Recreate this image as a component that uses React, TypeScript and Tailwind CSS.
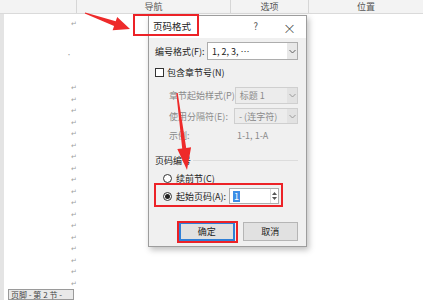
import React from "react";

const cjk = { fontFamily: '"Noto Sans CJK SC", "Noto Sans", sans-serif' };

function Chevron({ muted }: { muted?: boolean }) {
  return (
    <svg width="7" height="5" viewBox="0 0 7 5">
      <path d="M0.5 1 L3.5 4 L6.5 1" fill="none" stroke={muted ? "#9a9a9a" : "#606060"} strokeWidth="1" />
    </svg>
  );
}

function Select({ value, disabled, className }: { value: string; disabled?: boolean; className: string }) {
  return (
    <div
      className={`flex items-stretch border ${
        disabled ? "border-[#cfcfcf] bg-[#ececec] text-[#8a8a8a]" : "border-[#adadad] bg-white text-[#222]"
      } ${className}`}
    >
      <div className="flex-1 flex items-center pl-[4px] leading-none">{value}</div>
      <div className={`w-[10px] flex items-center justify-center ${disabled ? "bg-[#e2e2e2]" : "bg-[#e8e8e8]"}`}>
        <Chevron muted={disabled} />
      </div>
    </div>
  );
}

function Radio({ checked }: { checked?: boolean }) {
  return (
    <div className="w-[9px] h-[9px] shrink-0 rounded-full border border-[#333] bg-white flex items-center justify-center">
      {checked && <div className="w-[5px] h-[5px] rounded-full bg-[#222]" />}
    </div>
  );
}

function PageDialog() {
  return (
    <div className="absolute left-[148px] top-[15px] w-[159px] h-[232px] border border-[#9d9d9d] bg-[#f0f0f0] shadow-[2px_3px_6px_rgba(0,0,0,0.25)] flex flex-col whitespace-nowrap">
      {/* title bar */}
      <div className="h-[22px] shrink-0 bg-white flex items-center pl-[4px] pr-[10px] text-[9.5px] leading-none text-[#222]">
        <span>页码格式</span>
        <span className="ml-auto text-[#555]">?</span>
        <span className="ml-[25px] text-[13px] leading-none text-[#333] font-light">×</span>
      </div>

      <div className="flex flex-col pl-[6px] pr-[8px] text-[9px] leading-none text-[#222]">
        <div className="mt-[4px] h-[18px] flex items-center">
          <span className="w-[52px]">编号格式(F):</span>
          <Select value="1, 2, 3, …" className="w-[91px] h-[18px]" />
        </div>

        <div className="mt-[7px] h-[11px] flex items-center gap-[3px]">
          <div className="w-[9px] h-[9px] border border-[#333] bg-white" />
          <span>包含章节号(N)</span>
        </div>

        <div className="mt-[9px] h-[17px] flex items-center text-[#8a8a8a]">
          <span className="pl-[14px] w-[81px]">章节起始样式(P)</span>
          <Select value="标题 1" disabled className="w-[66px] h-[17px]" />
        </div>

        <div className="mt-[4px] h-[16px] flex items-center text-[#8a8a8a]">
          <span className="pl-[14px] w-[81px]">使用分隔符(E):</span>
          <Select value="-  (连字符)" disabled className="w-[66px] h-[16px]" />
        </div>

        <div className="mt-[4px] h-[14px] flex items-center text-[#8a8a8a]">
          <span className="pl-[14px] w-[82px]">示例:</span>
          <span>1-1, 1-A</span>
        </div>

        <div className="mt-[12px] h-[12px] flex items-center gap-[2px]">
          <span>页码编号</span>
          <div className="flex-1 h-px bg-[#dcdcdc]" />
        </div>

        <div className="mt-[6px] h-[12px] flex items-center gap-[4px] pl-[8px]">
          <Radio />
          <span>续前节(C)</span>
        </div>

        <div className="mt-[4px] h-[16px] flex items-center pl-[8px]">
          <Radio checked />
          <span className="ml-[4px] w-[53px]">起始页码(A):</span>
          <div className="w-[50px] h-[16px] shrink-0 border border-[#adadad] bg-white flex items-stretch">
            <div className="flex-1 flex items-center pl-[3px]">
              <span className="bg-[#3d8ee6] text-white px-[1px] leading-[11px]">1</span>
            </div>
            <div className="w-[8px] flex flex-col items-center justify-center gap-[2px] border-l border-[#dcdcdc]">
              <svg width="5" height="3" viewBox="0 0 5 3">
                <path d="M0 3 L2.5 0 L5 3 Z" fill="#555" />
              </svg>
              <svg width="5" height="3" viewBox="0 0 5 3">
                <path d="M0 0 L2.5 3 L5 0 Z" fill="#555" />
              </svg>
            </div>
          </div>
        </div>

        <div className="mt-[18px] flex gap-[8px] pl-[24px]">
          <div className="w-[57px] h-[19px] border-2 border-[#2f7fd6] bg-[#e1e1e1] flex items-center justify-center">
            确定
          </div>
          <div className="w-[57px] h-[19px] border border-[#b5b5b5] bg-[#e1e1e1] flex items-center justify-center">
            取消
          </div>
        </div>
      </div>
    </div>
  );
}

export default function App() {
  const marks = Array.from({ length: 18 });

  return (
    <div className="relative w-[423px] h-[300px] bg-white overflow-hidden" style={cjk}>
      {/* ribbon header */}
      <div className="h-[14px] bg-[#f3f3f3] border-b border-[#dadada] grid grid-cols-[76px_154px_78px_1fr] text-[9px] leading-[13px] text-[#555]">
        <div />
        <div className="border-l border-[#d6d6d6] text-center">导航</div>
        <div className="border-l border-[#d6d6d6] text-center">选项</div>
        <div className="border-l border-[#d6d6d6] text-center">位置</div>
      </div>

      {/* document page */}
      <div className="flex h-[286px]">
        <div className="w-[4px] bg-[#e4e4e4]" />
        <div className="flex-1 flex flex-col text-[#a0a0a0]">
          <div className="mt-[5px] pl-[67px] text-[7px] leading-[8px]">↵</div>
          <div className="mt-[24px] pl-[62px] text-[6px] leading-[8px]">•</div>
          <div className="mt-[24px] flex flex-col gap-[3.5px] pl-[67px]">
            {marks.map((_, i) => (
              <div key={i} className="text-[7px] leading-[8px]">↵</div>
            ))}
          </div>
          <div className="mt-auto ml-[4px] w-[66px] h-[11px] border border-[#9a9a9a] bg-[#e9e9e9] text-[8px] leading-[9px] text-[#444] pl-[2px] whitespace-nowrap">
            页脚 - 第 2 节 -
          </div>
        </div>
      </div>

      <PageDialog />

      {/* annotations */}
      <div className="absolute left-[133px] top-[14px] w-[66px] h-[22px] border-2 border-[#ec2227]" />
      <div className="absolute left-[154px] top-[183px] w-[129px] h-[24px] border-2 border-[#ec2227]" />
      <div className="absolute left-[177px] top-[221px] w-[61px] h-[22px] border-2 border-[#ec2227]" />

      <svg className="absolute left-0 top-0" width="423" height="300" viewBox="0 0 423 300">
        <polygon
          points="84.8,13.5 114.1,26.0 112.6,30.2 130,29 117.2,17.0 115.7,21.2 85.2,12.5"
          fill="#ee2a2a"
        />
        <polygon
          points="176.3,93.1 182.2,148.5 177.3,149.1 187,170 191.1,147.3 186.2,147.9 177.7,92.9"
          fill="#ee2a2a"
        />
      </svg>
    </div>
  );
}
